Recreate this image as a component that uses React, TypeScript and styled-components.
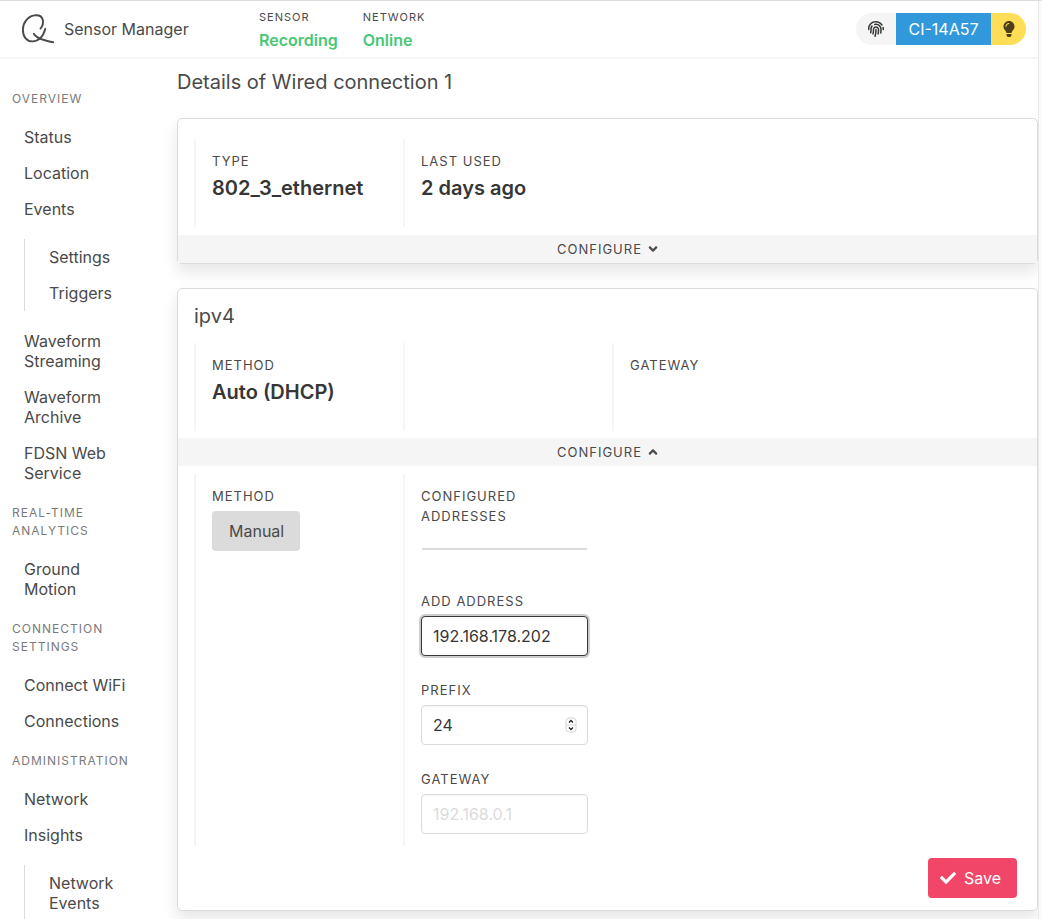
import React from 'react';
import styled, { createGlobalStyle } from 'styled-components';
import { FaAngleDown, FaAngleUp, FaCheck, FaFingerprint, FaLightbulb } from 'react-icons/fa';

const GlobalStyle = createGlobalStyle`
  *, *::before, *::after { box-sizing: border-box; }
  body {
    margin: 0;
    background: #fff;
    color: #4a4a4a;
    font-family: Inter, "Liberation Sans", sans-serif;
    font-size: 16px;
    line-height: 24px;
  }
  button, input { font: inherit; color: inherit; }
  ul { list-style: none; margin: 0; padding: 0; }
  h1, h2, p { margin: 0; font-weight: 400; }
`;

const Shell = styled.div`
  display: flex;
  height: 100vh;
  overflow: hidden;
  border-top: 1px solid #dedede;
`;

const Page = styled.div`
  flex: 1;
  min-width: 0;
  display: flex;
  flex-direction: column;
`;

const ScrollTrack = styled.div`
  flex: none;
  width: 4px;
  background: #fafafa;
  border-left: 1px solid #e8e8e8;
`;

const Header = styled.header`
  flex: none;
  display: flex;
  align-items: center;
  height: 58px;
  padding: 0 12px 0 20px;
  border-bottom: 2px solid #f5f5f5;
`;

const Brand = styled.a`
  display: flex;
  align-items: center;
  gap: 8px;
  width: 239px;
  color: inherit;
  text-decoration: none;
`;

const Stats = styled.dl`
  display: flex;
  gap: 25px;
  margin: 0;
  padding-top: 2px;
`;

const StatLabel = styled.dt`
  font-size: 11px;
  line-height: 20px;
  letter-spacing: 1px;
  text-transform: uppercase;
`;

const StatValue = styled.dd`
  margin: 0;
  color: #48c774;
  font-weight: 600;
  line-height: 26px;
`;

const Tags = styled.div`
  display: flex;
  margin-left: auto;
  height: 32px;
  border-radius: 16px;
  overflow: hidden;
`;

const Tag = styled.span<{ $bg: string; $fg: string; $width: number }>`
  display: flex;
  align-items: center;
  justify-content: center;
  width: ${(p) => p.$width}px;
  background: ${(p) => p.$bg};
  color: ${(p) => p.$fg};
`;

const Body = styled.div`
  flex: 1;
  min-height: 0;
  display: flex;
  overflow: hidden;
`;

const Sidebar = styled.nav`
  flex: none;
  width: 144px;
  margin-right: 33px;
  padding: 31px 0 0 12px;
`;

const MenuLabel = styled.p`
  color: #7a7a7a;
  font-size: 12px;
  line-height: 18px;
  letter-spacing: 1px;
  text-transform: uppercase;
  margin-bottom: 11px;

  ul + & { margin-top: 13px; }
`;

const MenuLink = styled.a`
  display: block;
  padding: 8px 12px;
  line-height: 20px;
  color: inherit;
  text-decoration: none;
`;

const SubMenu = styled.ul`
  && {
    margin: 12px 0 12px 12px;
    padding-left: 12px;
    border-left: 1px solid #dbdbdb;
  }
`;

const Main = styled.main`
  flex: 1;
  min-width: 0;
  padding-top: 7px;
`;

const PageTitle = styled.h1`
  font-size: 20px;
  line-height: 32px;
  margin-bottom: 20px;
`;

const Card = styled.section`
  background: #fff;
  border: 1px solid #dbdbdb;
  border-radius: 5px;
  box-shadow: 0 8px 16px rgba(10, 10, 10, 0.1);
  margin-bottom: 24px;
`;

const CardTitle = styled.h2`
  padding: 16px 16px 0;
  font-size: 20px;
  line-height: 22px;
`;

const Columns = styled.div<{ $top: number; $bottom: number }>`
  display: grid;
  grid-template-columns: repeat(4, 1fr);
  padding: ${(p) => p.$top}px 7px ${(p) => p.$bottom}px 16px;
`;

const Column = styled.div`
  border-left: 2px solid #f5f5f5;
  padding: 12px 24px 12px 16px;
`;

const Fact = styled(Column)`
  min-height: 88px;
`;

const Label = styled.label`
  display: block;
  font-size: 13px;
  line-height: 20px;
  letter-spacing: 1px;
  text-transform: uppercase;
`;

const Value = styled.p`
  color: #363636;
  font-size: 20px;
  font-weight: 600;
  line-height: 34px;
  white-space: nowrap;
`;

const ConfigureBar = styled.button`
  display: flex;
  align-items: center;
  justify-content: center;
  gap: 4px;
  width: 100%;
  height: 28px;
  border: 0;
  padding: 0 0 0 2px;
  background: #f5f5f5;
  font-size: 13px;
  letter-spacing: 1px;
  text-transform: uppercase;
`;

const MethodButton = styled.button`
  height: 40px;
  margin-top: 5px;
  padding: 0 16px 0 17px;
  border: 0;
  border-radius: 4px;
  background: #dbdbdb;
`;

const Rule = styled.hr`
  height: 2px;
  margin: 22px 1px 41px;
  border: 0;
  background: #dbdbdb;
`;

const Field = styled.div`
  & + & { margin-top: 24px; }
`;

const Control = styled.div`
  position: relative;
  margin-top: 5px;
`;

const Input = styled.input<{ $active?: boolean }>`
  display: block;
  width: 100%;
  height: 40px;
  padding: 0 11px;
  border: 1px solid ${(p) => (p.$active ? '#363636' : '#dbdbdb')};
  border-radius: 4px;
  background: #fff;
  color: #363636;
  outline: none;
  box-shadow: ${(p) =>
    p.$active ? '0 0 0 2px rgba(54, 54, 54, 0.25)' : 'inset 0 1px 2px rgba(10, 10, 10, 0.05)'};
  appearance: textfield;

  &::-webkit-inner-spin-button { appearance: none; margin: 0; }
  &::placeholder { color: #dbdbdb; opacity: 1; }
`;

const Stepper = styled.svg`
  position: absolute;
  top: 12px;
  right: 11px;
`;

const Actions = styled.div`
  display: flex;
  justify-content: flex-end;
  padding: 0 20px 12px;
`;

const SaveButton = styled.button`
  display: flex;
  align-items: center;
  gap: 8px;
  height: 40px;
  padding: 0 16px 0 12px;
  border: 0;
  border-radius: 4px;
  background: #f14668;
  color: #fff;
`;

function Logo() {
  return (
    <svg width="36" height="32" viewBox="0 0 36 32" fill="none" stroke="#4a4a4a" strokeWidth="1.900" strokeLinecap="round" aria-hidden="true">
      <path d="M20.500 15.500C22.500 13.500 23.400 10 22.800 7C21.900 3.200 18.300 1.900 14.500 2.400C8 3.300 3 9.200 2.900 16.500C2.800 23.500 6.500 28.600 12.500 28.400C19.500 28.200 23.500 22.500 25.300 15.800" />
      <path d="M13.800 20.800C15.800 24.200 19.500 25.800 24 27C27.500 28 30.500 28.800 33.200 29.300" />
    </svg>
  );
}

type Item = { text: string; children?: string[] };
type Group = { label: string; items: Item[] };

const menu: Group[] = [
  {
    label: 'Overview',
    items: [
      { text: 'Status' },
      { text: 'Location' },
      { text: 'Events', children: ['Settings', 'Triggers'] },
      { text: 'Waveform Streaming' },
      { text: 'Waveform Archive' },
      { text: 'FDSN Web Service' },
    ],
  },
  { label: 'Real-time analytics', items: [{ text: 'Ground Motion' }] },
  { label: 'Connection settings', items: [{ text: 'Connect WiFi' }, { text: 'Connections' }] },
  {
    label: 'Administration',
    items: [{ text: 'Network' }, { text: 'Insights', children: ['Network Events'] }],
  },
];

function Menu() {
  return (
    <Sidebar aria-label="Main">
      {menu.map((group) => (
        <React.Fragment key={group.label}>
          <MenuLabel>{group.label}</MenuLabel>
          <ul>
            {group.items.map((item) => (
              <li key={item.text}>
                <MenuLink href="#">{item.text}</MenuLink>
                {item.children && (
                  <SubMenu>
                    {item.children.map((child) => (
                      <li key={child}>
                        <MenuLink href="#">{child}</MenuLink>
                      </li>
                    ))}
                  </SubMenu>
                )}
              </li>
            ))}
          </ul>
        </React.Fragment>
      ))}
    </Sidebar>
  );
}

function FactCell({ label, value }: { label?: string; value?: string }) {
  return (
    <Fact>
      {label && <Label as="p">{label}</Label>}
      {value && <Value>{value}</Value>}
    </Fact>
  );
}

export default function App() {
  return (
    <>
      <GlobalStyle />
      <Shell>
        <Page>
          <Header>
            <Brand href="#">
              <Logo />
              Sensor Manager
            </Brand>
            <Stats>
              <div>
                <StatLabel>Sensor</StatLabel>
                <StatValue>Recording</StatValue>
              </div>
              <div>
                <StatLabel>Network</StatLabel>
                <StatValue>Online</StatValue>
              </div>
            </Stats>
            <Tags>
              <Tag $bg="#f5f5f5" $fg="#363636" $width={40}>
                <FaFingerprint size={16} />
              </Tag>
              <Tag $bg="#3298dc" $fg="#fff" $width={95}>CI-14A57</Tag>
              <Tag $bg="#ffdd57" $fg="#4b4119" $width={35}>
                <FaLightbulb size={16} />
              </Tag>
            </Tags>
          </Header>
          <Body>
            <Menu />
            <Main>
              <PageTitle>Details of Wired connection 1</PageTitle>
              <Card>
                <Columns $top={20} $bottom={8}>
                  <FactCell label="Type" value="802_3_ethernet" />
                  <FactCell label="Last used" value="2 days ago" />
                </Columns>
                <ConfigureBar type="button" aria-expanded={false}>
                  Configure <FaAngleDown size={14} />
                </ConfigureBar>
              </Card>
              <Card>
                <CardTitle>ipv4</CardTitle>
                <Columns $top={16} $bottom={7}>
                  <FactCell label="Method" value="Auto (DHCP)" />
                  <FactCell />
                  <FactCell label="Gateway" />
                </Columns>
                <ConfigureBar type="button" aria-expanded>
                  Configure <FaAngleUp size={14} />
                </ConfigureBar>
                <form>
                  <Columns $top={8} $bottom={12}>
                    <Column>
                      <Label htmlFor="method">Method</Label>
                      <MethodButton id="method" type="button">Manual</MethodButton>
                    </Column>
                    <Column>
                      <Label as="p">Configured addresses</Label>
                      <Rule />
                      <Field>
                        <Label htmlFor="address">Add address</Label>
                        <Control>
                          <Input id="address" type="text" defaultValue="192.168.178.202" $active />
                        </Control>
                      </Field>
                      <Field>
                        <Label htmlFor="prefix">Prefix</Label>
                        <Control>
                          <Input id="prefix" type="number" defaultValue={24} />
                          <Stepper width="12" height="16" viewBox="0 0 12 16" fill="none" aria-hidden="true">
                            <rect x="1" y="1" width="10" height="14" rx="3" fill="#fff" stroke="#d4d4d4" />
                            <path d="M1 8H11" stroke="#d4d4d4" />
                            <path d="M4 5.500L6 3.500L8 5.500M4 10.500L6 12.500L8 10.500" stroke="#222" strokeWidth="1.300" />
                          </Stepper>
                        </Control>
                      </Field>
                      <Field>
                        <Label htmlFor="gateway">Gateway</Label>
                        <Control>
                          <Input id="gateway" type="text" placeholder="192.168.0.1" />
                        </Control>
                      </Field>
                    </Column>
                  </Columns>
                  <Actions>
                    <SaveButton type="button">
                      <FaCheck size={16} />
                      Save
                    </SaveButton>
                  </Actions>
                </form>
              </Card>
            </Main>
          </Body>
        </Page>
        <ScrollTrack />
      </Shell>
    </>
  );
}
